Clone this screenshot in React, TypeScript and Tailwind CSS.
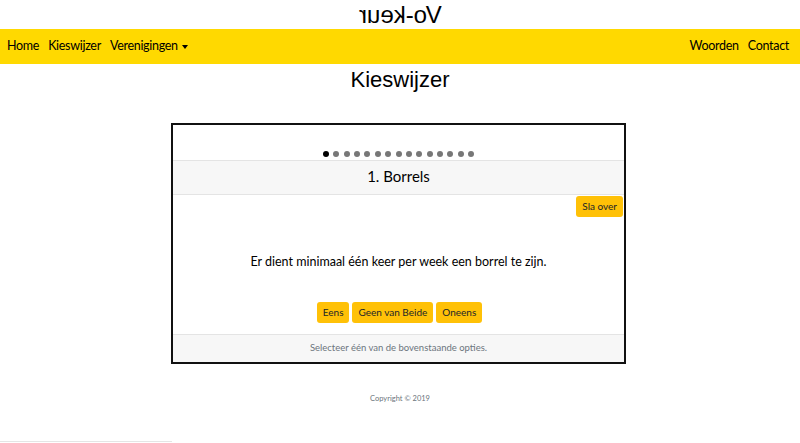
export default function App() {
    // Constants
    const dots = Array.from({ length: 15 }, (_, i) => i)
    const btn = `bg-[#ffc107] rounded-[3px] text-[10px] text-[#212529] px-[6px] h-[21px] flex items-center`

    return (
        <div className="w-[800px] h-[443px] bg-white overflow-hidden font-['Lato',sans-serif] text-[#111]">
            <h1 className="h-[29px] flex items-center justify-center">
                <span className="-scale-x-100 text-[24px] leading-none font-['Liberation_Sans',sans-serif] text-black">Vo-keur</span>
            </h1>
            <nav className="h-[35px] bg-[#ffd900] flex items-center justify-between px-[7px] text-[12.5px] tracking-[-0.3px] text-black">
                <div className="flex items-center gap-[9px]">
                    <a>Home</a>
                    <a>Kieswijzer</a>
                    <a className="flex items-center gap-[4px]">
                        Verenigingen
                        <span className="w-0 h-0 border-x-[3.5px] border-x-transparent border-t-[4px] border-t-black"></span>
                    </a>
                </div>
                <div className="flex items-center gap-[9px] pr-[4px]">
                    <a>Woorden</a>
                    <a>Contact</a>
                </div>
            </nav>
            <h2 className="text-center text-[22px] leading-[30px] mt-[1px] font-['Liberation_Sans',sans-serif] text-black">Kieswijzer</h2>
            <div className="ml-[171px] mt-[28px] w-[455px] border-2 border-[#111] flex flex-col">
                <div className="h-[35px] flex items-end justify-center pb-[3px] gap-[4.4px]">
                    {dots.map(i => (
                        <span key={i} className={`w-[6px] h-[6px] rounded-full ${i === 0 ? 'bg-black' : 'bg-[#777]'}`}></span>
                    ))}
                </div>
                <div className="h-[35px] bg-[#f7f7f7] border-y border-[#e4e4e4] flex items-center justify-center text-[15px] text-black pb-[3px]">
                    1. Borrels
                </div>
                <div className="h-[139px] flex flex-col">
                    <div className="flex justify-end pr-[1px]">
                        <button className={`${btn} mt-[1px]`}>Sla over</button>
                    </div>
                    <p className="text-center text-[12.5px] text-black mt-[36px]">Er dient minimaal één keer per week een borrel te zijn.</p>
                    <div className="flex justify-center gap-[3px] mt-[30px] pl-[2px]">
                        <button className={btn}>Eens</button>
                        <button className={btn}>Geen van Beide</button>
                        <button className={btn}>Oneens</button>
                    </div>
                </div>
                <div className="h-[28px] bg-[#f7f7f7] border-t border-[#e4e4e4] flex items-center justify-center text-[9.5px] text-[#6c757d]">
                    Selecteer één van de bovenstaande opties.
                </div>
            </div>
            <p className="text-center text-[7.5px] text-[#6c757d] mt-[29px]">Copyright © 2019</p>
            <div className="w-[172px] h-px bg-[#e5e5e5] mt-[37px]"></div>
        </div>
    )
}
